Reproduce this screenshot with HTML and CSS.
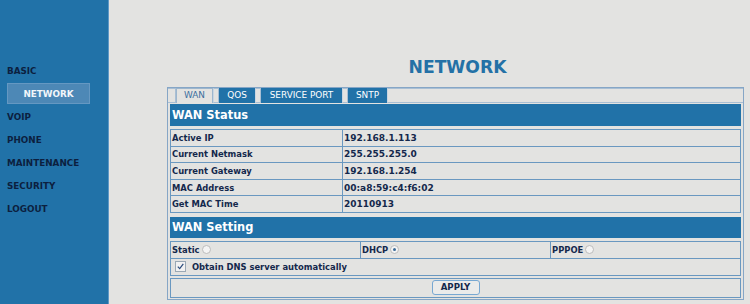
FILE: index.html
```html
<!DOCTYPE html>
<html>
<head>
<meta charset="utf-8">
<link rel="stylesheet" href="styles.css">
</head>
<body>
<div class="page">
  <nav class="side">
    <div class="item">BASIC</div>
    <div class="item sub"><span class="subbox">NETWORK</span></div>
    <div class="item">VOIP</div>
    <div class="item">PHONE</div>
    <div class="item">MAINTENANCE</div>
    <div class="item">SECURITY</div>
    <div class="item">LOGOUT</div>
  </nav>
  <main class="main">
    <div class="wrap">
      <h1 class="title">NETWORK</h1>
      <div class="frame">
        <div class="tabs">
          <span class="tgap first"></span>
          <span class="tab active w-wan">WAN</span>
          <span class="tgap"></span>
          <span class="tab w-qos">QOS</span>
          <span class="tgap"></span>
          <span class="tab w-sp">SERVICE PORT</span>
          <span class="tgap"></span>
          <span class="tab w-sntp">SNTP</span>
          <span class="tfill"></span>
        </div>
        <div class="bar">WAN Status</div>
        <table class="grid status">
          <tr><td class="lbl">Active IP</td><td class="val">192.168.1.113</td></tr>
          <tr><td class="lbl">Current Netmask</td><td class="val">255.255.255.0</td></tr>
          <tr><td class="lbl">Current Gateway</td><td class="val">192.168.1.254</td></tr>
          <tr><td class="lbl">MAC Address</td><td class="val">00:a8:59:c4:f6:02</td></tr>
          <tr><td class="lbl">Get MAC Time</td><td class="val">20110913</td></tr>
        </table>
        <div class="bar bar2">WAN Setting</div>
        <table class="grid setting">
          <tr>
            <td class="lbl third">Static<span class="radio"></span></td>
            <td class="lbl third">DHCP<span class="radio on"><span class="dot"></span></span></td>
            <td class="lbl third">PPPOE<span class="radio"></span></td>
          </tr>
          <tr>
            <td class="lbl" colspan="3"><span class="check"><svg width="9" height="9" viewBox="0 0 9 9"><path d="M1.8 4.6 L3.7 6.6 L7.3 1.8" fill="none" stroke="#2a4a7a" stroke-width="1.2"/></svg></span>Obtain DNS server automatically</td>
          </tr>
        </table>
        <div class="applybox"><button class="apply">APPLY</button></div>
      </div>
    </div>
  </main>
</div>
</body>
</html>
```

FILE: styles.css
```css
html, body {
  margin: 0;
  padding: 0;
  background: #e3e3e1;
}
.page {
  display: flex;
  width: 750px;
  height: 304px;
  overflow: hidden;
  font-family: "DejaVu Sans", Verdana, sans-serif;
}
.side {
  flex: none;
  width: 109px;
  height: 304px;
  box-sizing: border-box;
  background: #2172a8;
  border-right: 1px solid #5f98c6;
  padding-top: 60px;
}
.item {
  height: 23px;
  line-height: 23px;
  padding-left: 7px;
  font-size: 8.8px;
  font-weight: bold;
  color: #0c1f3f;
}
.item.sub {
  line-height: normal;
}
.subbox {
  display: block;
  width: 83px;
  height: 21px;
  line-height: 21px;
  box-sizing: border-box;
  background: #4d88b6;
  border: 1px solid #6598c2;
  color: #f2f6fa;
  text-align: center;
}
.main {
  flex: 1;
  padding-top: 57px;
  padding-left: 58px;
}
.wrap {
  width: 577px;
}
.title {
  margin: 0 0 10px;
  height: 20px;
  line-height: 20px;
  padding-left: 4px;
  text-align: center;
  font-size: 17.2px;
  font-weight: bold;
  color: #2471a6;
}
.frame {
  border: 1px solid #86a6c6;
  padding: 0 2px 1px;
  box-sizing: border-box;
  width: 577px;
}
.tabs {
  display: flex;
  height: 15px;
  margin: 0 -2px;
}
.tgap, .tfill {
  box-sizing: border-box;
  height: 15px;
  border: 1px solid #a9bfd4;
  border-left-color: #c9d6e2;
}
.tgap { width: 6px; }
.tgap.first { width: 8px; border-left: none; }
.tfill { flex: 1; border-right: none; }
.tab {
  box-sizing: border-box;
  height: 15px;
  line-height: 13px;
  text-align: center;
  font-size: 8.9px;
  color: #ffffff;
  background: #2172a8;
  border: 1px solid #2172a8;
}
.tab.active {
  background: #e3e3e1;
  color: #3c6e9e;
  border: 1px solid #9db6cd;
  border-bottom: none;
}
.w-wan { width: 37px; }
.w-qos { width: 36px; }
.w-sp { width: 81px; }
.w-sntp { width: 39px; }
.bar {
  margin-top: 1px;
  height: 22px;
  line-height: 22px;
  background: #2172a8;
  color: #ffffff;
  font-size: 11.4px;
  font-weight: bold;
  padding-left: 2px;
}
.bar2 {
  margin-top: 4px;
  height: 21px;
  line-height: 21px;
}
.grid {
  width: 100%;
  border-collapse: collapse;
  margin-top: 3px;
}
.grid td {
  border: 1px solid #6a98c0;
  padding: 0 0 0 1px;
  height: 15.6px;
  line-height: 14px;
  white-space: nowrap;
  color: #14284c;
  font-weight: bold;
}
.lbl {
  width: 170px;
  font-size: 8.4px;
}
.val {
  font-size: 9px;
}
.setting td {
  height: 16px;
}
.third {
  width: 33.3%;
}
.radio {
  display: inline-block;
  width: 7px;
  height: 7px;
  margin-left: 2px;
  border: 1px solid #bcbcbc;
  border-radius: 50%;
  background: #f4f4f4;
  vertical-align: -1px;
  position: relative;
}
.radio .dot {
  position: absolute;
  left: 2px;
  top: 2px;
  width: 3px;
  height: 3px;
  border-radius: 50%;
  background: #3a6a98;
}
.check {
  display: inline-block;
  width: 9px;
  height: 9px;
  margin: 0 6px 0 3px;
  border: 1px solid #9aa8b4;
  background: #f2f2f2;
  vertical-align: -2px;
  line-height: 0;
}
.check svg { display: block; }
.applybox {
  margin-top: 2px;
  height: 20px;
  box-sizing: border-box;
  border: 1px solid #6a98c0;
  display: flex;
  align-items: center;
  justify-content: center;
}
.apply {
  width: 48px;
  height: 15px;
  padding: 0;
  box-sizing: border-box;
  border: 1px solid #78a8d2;
  border-radius: 3px;
  background: #ebebea;
  color: #14284c;
  font-family: "DejaVu Sans", Verdana, sans-serif;
  font-weight: bold;
  font-size: 8.6px;
  line-height: 13px;
}
```
